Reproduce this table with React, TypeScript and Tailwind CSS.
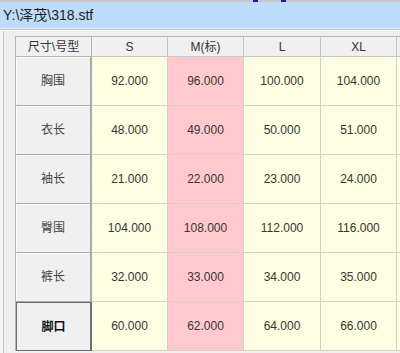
import React from "react";

type Row = {
  name: string;
  values: string[];
  selected?: boolean;
};

const sizes = ["S", "M(标)", "L", "XL"];

const rows: Row[] = [
  { name: "胸围", values: ["92.000", "96.000", "100.000", "104.000"] },
  { name: "衣长", values: ["48.000", "49.000", "50.000", "51.000"] },
  { name: "袖长", values: ["21.000", "22.000", "23.000", "24.000"] },
  { name: "臀围", values: ["104.000", "108.000", "112.000", "116.000"] },
  { name: "裤长", values: ["32.000", "33.000", "34.000", "35.000"] },
  { name: "脚口", values: ["60.000", "62.000", "64.000", "66.000"], selected: true },
];

const font = {
  fontFamily: '"Liberation Sans", "Noto Sans CJK SC", sans-serif',
};

const SizeTable: React.FC = () => {
  return (
    <div className="grid grid-cols-[76px_76px_76px_77px_76px_1fr] border-t border-l border-[#b4b4b4]">
      {/* header row */}
      <div className="h-[20px] flex items-center justify-center bg-[#f0f0f0] border-r border-b border-[#b4b4b4] text-[12px] text-[#333]">
        尺寸\号型
      </div>
      {sizes.map((s) => (
        <div
          key={s}
          className="h-[20px] flex items-center justify-center bg-[#f0f0f0] border-r border-b border-[#c4c4c4] text-[12px] text-[#333]"
        >
          {s}
        </div>
      ))}
      <div className="h-[20px] bg-[#f0f0f0] border-b border-[#c4c4c4]" />

      {/* data rows */}
      {rows.map((row) => (
        <React.Fragment key={row.name}>
          <div
            className={`h-[49px] flex items-center justify-center bg-[#f0f0f0] text-[12px] ${
              row.selected
                ? "border border-r-2 border-[#6e6e6e] font-bold text-[#111]"
                : "border-r-2 border-b border-[#a8a8a8] text-[#444] shadow-[inset_1px_1px_0_#ffffff]"
            }`}
          >
            {row.name}
          </div>
          {row.values.map((v, i) => (
            <div
              key={i}
              className={`h-[49px] flex items-center justify-center border-r border-b border-[#d2d2c8] text-[12px] text-[#363636] ${
                i === 1 ? "bg-[#ffc9cd]" : "bg-[#fefee2]"
              }`}
            >
              {v}
            </div>
          ))}
          <div className="h-[49px] bg-[#fefee2] border-b border-[#d2d2c8]" />
        </React.Fragment>
      ))}
    </div>
  );
};

export default function App() {
  return (
    <div className="w-[400px] h-[353px] overflow-hidden bg-[#f0f0f0] flex flex-col" style={font}>
      {/* top strip */}
      <div className="h-[2px] bg-[#c9c9c9] flex">
        <div className="w-[5px] ml-[253px] bg-[#1a1a9a]" />
        <div className="w-[5px] ml-[23px] bg-[#1a1a9a]" />
      </div>

      {/* title bar */}
      <div className="h-[26px] bg-[#bddcf9] flex items-center pl-[3px] text-[14px] text-[#1c1c1c]">
        Y:\泽茂\318.stf
      </div>
      <div className="h-[2px] bg-[#e4e8ec] border-b border-[#c8c8c8]" />
      <div className="h-[1px] bg-white" />

      {/* body */}
      <div className="flex-1 flex">
        <div className="w-[3px] bg-[#f4f4f4]" />
        <div className="w-px bg-[#c4c4c4]" />
        <div className="flex-1 pl-[11px] pt-[5px] bg-[#efefef]">
          <SizeTable />
        </div>
      </div>
    </div>
  );
}
